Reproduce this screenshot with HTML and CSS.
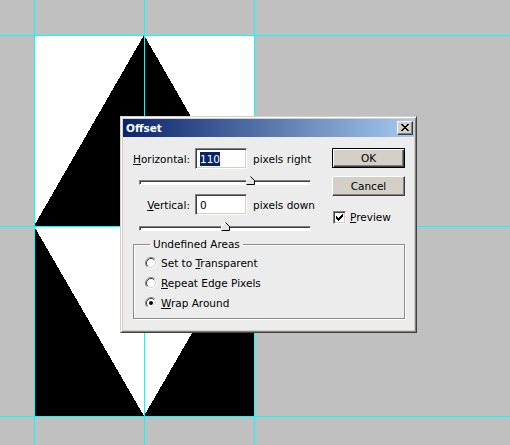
FILE: index.html
```html
<!DOCTYPE html>
<html>
<head>
<meta charset="utf-8">
<title>Offset</title>
<link rel="stylesheet" href="styles.css">
</head>
<body>
<div class="workspace">
  <svg class="doc" width="220" height="381" viewBox="0 0 220 381" shape-rendering="crispEdges">
    <rect width="220" height="381" fill="#fff"/>
    <polygon points="110,0 0,191 220,191" fill="#000"/>
    <polygon points="0,191 0,381 110,381" fill="#000"/>
    <polygon points="220,191 220,381 110,381" fill="#000"/>
  </svg>
  <div class="guide gv x34"></div>
  <div class="guide gv x144"></div>
  <div class="guide gv x254"></div>
  <div class="guide gh y35"></div>
  <div class="guide gh y226"></div>
  <div class="guide gh y416"></div>

  <div class="dialog">
    <div class="titlebar">
      <span class="title">Offset</span>
      <span class="close">
        <svg width="8" height="7" viewBox="0 0 8 7" shape-rendering="crispEdges">
          <path d="M0 0h2v1h-2zM6 0h2v1h-2zM1 1h2v1h-2zM5 1h2v1h-2zM2 2h4v1h-4zM3 3h2v1h-2zM2 4h4v1h-4zM1 5h2v1h-2zM5 5h2v1h-2zM0 6h2v1h-2zM6 6h2v1h-2z" fill="#000"/>
        </svg>
      </span>
    </div>
    <div class="client">
      <div class="top">
        <div class="fields">
          <div class="row">
            <span class="lbl"><u>H</u>orizontal:</span>
            <span class="field"><span class="sel">110</span></span>
            <span class="unit">pixels right</span>
          </div>
          <div class="slider">
            <svg class="thumb th-h" width="9" height="9" viewBox="0 0 9 9">
              <polygon points="0.5,8.5 0.5,4.5 4.5,0.5 8.5,4.5 8.5,8.5" fill="#e4e4e4"/>
              <polyline points="0.5,8 0.5,4.5 4.5,0.5" fill="none" stroke="#fff"/>
              <polyline points="4.5,0.5 8.5,4.5 8.5,8.5 0.5,8.5" fill="none" stroke="#000"/>
            </svg>
          </div>
          <div class="row">
            <span class="lbl"><u>V</u>ertical:</span>
            <span class="field"><span class="val">0</span></span>
            <span class="unit">pixels down</span>
          </div>
          <div class="slider">
            <svg class="thumb th-v" width="9" height="9" viewBox="0 0 9 9">
              <polygon points="0.5,8.5 0.5,4.5 4.5,0.5 8.5,4.5 8.5,8.5" fill="#e4e4e4"/>
              <polyline points="0.5,8 0.5,4.5 4.5,0.5" fill="none" stroke="#fff"/>
              <polyline points="4.5,0.5 8.5,4.5 8.5,8.5 0.5,8.5" fill="none" stroke="#000"/>
            </svg>
          </div>
        </div>
        <div class="buttons">
          <span class="btn default">OK</span>
          <span class="btn cancel">Cancel</span>
          <span class="check">
            <span class="box">
              <svg width="7" height="7" viewBox="0 0 7 7" shape-rendering="crispEdges">
                <path d="M6 0h1v3h-1zM5 1h1v3h-1zM4 2h1v3h-1zM3 3h1v3h-1zM2 4h1v3h-1zM1 3h1v3h-1zM0 2h1v3h-1z" fill="#000"/>
              </svg>
            </span>
            <span><u>P</u>review</span>
          </span>
        </div>
      </div>
      <div class="group">
        <span class="legend">Undefined Areas</span>
        <div class="radio">
          <svg width="12" height="12" viewBox="0 0 12 12">
            <circle cx="6" cy="6" r="5" fill="#fff"/>
            <path d="M2.11 9.89A5.5 5.5 0 0 1 9.89 2.11" fill="none" stroke="#808080"/>
            <path d="M9.89 2.11A5.5 5.5 0 0 1 2.11 9.89" fill="none" stroke="#fff"/>
            <path d="M2.82 9.18A4.5 4.5 0 0 1 9.18 2.82" fill="none" stroke="#404040"/>
            <path d="M9.18 2.82A4.5 4.5 0 0 1 2.82 9.18" fill="none" stroke="#d4d0c8"/>
          </svg>
          <span>Set to <u>T</u>ransparent</span>
        </div>
        <div class="radio">
          <svg width="12" height="12" viewBox="0 0 12 12">
            <circle cx="6" cy="6" r="5" fill="#fff"/>
            <path d="M2.11 9.89A5.5 5.5 0 0 1 9.89 2.11" fill="none" stroke="#808080"/>
            <path d="M9.89 2.11A5.5 5.5 0 0 1 2.11 9.89" fill="none" stroke="#fff"/>
            <path d="M2.82 9.18A4.5 4.5 0 0 1 9.18 2.82" fill="none" stroke="#404040"/>
            <path d="M9.18 2.82A4.5 4.5 0 0 1 2.82 9.18" fill="none" stroke="#d4d0c8"/>
          </svg>
          <span><u>R</u>epeat Edge Pixels</span>
        </div>
        <div class="radio">
          <svg width="12" height="12" viewBox="0 0 12 12">
            <circle cx="6" cy="6" r="5" fill="#fff"/>
            <path d="M2.11 9.89A5.5 5.5 0 0 1 9.89 2.11" fill="none" stroke="#808080"/>
            <path d="M9.89 2.11A5.5 5.5 0 0 1 2.11 9.89" fill="none" stroke="#fff"/>
            <path d="M2.82 9.18A4.5 4.5 0 0 1 9.18 2.82" fill="none" stroke="#404040"/>
            <path d="M9.18 2.82A4.5 4.5 0 0 1 2.82 9.18" fill="none" stroke="#d4d0c8"/>
            <circle cx="6" cy="6" r="2" fill="#000"/>
          </svg>
          <span><u>W</u>rap Around</span>
        </div>
      </div>
    </div>
  </div>
</div>
</body>
</html>
```

FILE: styles.css
```css
html, body {
  margin: 0;
  padding: 0;
}

.workspace {
  position: relative;
  width: 510px;
  height: 445px;
  overflow: hidden;
  background: #c0c0c0;
  font-family: "DejaVu Sans", Verdana, sans-serif;
  font-size: 10.5px;
  color: #000;
}

.doc {
  display: block;
  margin: 35px 0 0 34px;
}

.guide {
  position: absolute;
  background: #00ffff;
}
.gv { top: 0; bottom: 0; width: 1px; }
.gh { left: 0; right: 0; height: 1px; }
.x34 { left: 34px; }
.x144 { left: 144px; }
.x254 { left: 254px; }
.y35 { top: 35px; }
.y226 { top: 226px; }
.y416 { top: 416px; }

.dialog {
  position: absolute;
  left: 120px;
  top: 116px;
  width: 297px;
  height: 217px;
  box-sizing: border-box;
  border: 1px solid;
  border-color: #d4d0c8 #404040 #404040 #d4d0c8;
  box-shadow: inset 1px 1px #fff, inset -1px -1px #808080;
  padding: 2px;
  background: #d4d0c8;
  display: flex;
  flex-direction: column;
}

.titlebar {
  height: 18px;
  flex: 0 0 18px;
  display: flex;
  align-items: center;
  justify-content: space-between;
  padding: 0 1px 0 3px;
  background: linear-gradient(to right, #0a246a, #a6caf0);
}

.title {
  color: #fff;
  font-weight: bold;
  font-size: 10.5px;
  line-height: 18px;
}

.close {
  width: 16px;
  height: 14px;
  box-sizing: border-box;
  border: 1px solid;
  border-color: #fff #404040 #404040 #fff;
  box-shadow: inset -1px -1px #808080;
  background: #d4d0c8;
  display: flex;
  align-items: center;
  justify-content: center;
}
.close svg { display: block; margin: 0 1px 1px 0; }

.client {
  flex: 1;
  background: #ececec;
  padding: 11px 9px 0 10px;
}

.top {
  display: flex;
}

.fields {
  flex: 0 0 199px;
  display: flex;
  flex-direction: column;
}

.row {
  display: flex;
  align-items: center;
  height: 21px;
  line-height: 14px;
}

.lbl {
  width: 57px;
  text-align: right;
  white-space: nowrap;
}

.field {
  width: 52px;
  height: 21px;
  box-sizing: border-box;
  margin-left: 5px;
  border: 1px solid;
  border-color: #808080 #fff #fff #808080;
  box-shadow: inset 1px 1px #404040, inset -1px -1px #d4d0c8;
  background: #fff;
  padding-left: 4px;
  display: flex;
  align-items: center;
}

.sel {
  background: #0a246a;
  color: #fff;
  line-height: 14px;
}

.val {
  line-height: 14px;
}

.unit {
  margin-left: 6px;
  white-space: nowrap;
}

.slider {
  position: relative;
  width: 172px;
  height: 5px;
  box-sizing: border-box;
  margin: 11px 0 9px 6px;
  border: 1px solid;
  border-color: #808080 #fff #fff #808080;
  box-shadow: inset 1px 1px #404040;
  background: #fff;
}
.slider:last-child { margin-bottom: 0; }

.thumb {
  position: absolute;
  top: -5px;
  display: block;
}
.th-h { left: 106px; }
.th-v { left: 81px; }

.buttons {
  flex: 0 0 73px;
  display: flex;
  flex-direction: column;
}

.btn {
  height: 20px;
  box-sizing: border-box;
  border: 1px solid;
  border-color: #fff #404040 #404040 #fff;
  box-shadow: inset -1px -1px #808080;
  background: #d4d0c8;
  display: flex;
  align-items: center;
  justify-content: center;
}

.btn.default {
  border-color: #000;
  box-shadow: inset 1px 1px #fff, inset -1px -1px #404040, inset -2px -2px #808080;
}

.btn.cancel {
  margin-top: 8px;
}

.check {
  margin-top: 15px;
  margin-left: 1px;
  display: flex;
  align-items: center;
  height: 13px;
  line-height: 13px;
}

.box {
  width: 13px;
  height: 13px;
  box-sizing: border-box;
  border: 1px solid;
  border-color: #808080 #fff #fff #808080;
  box-shadow: inset 1px 1px #404040, inset -1px -1px #d4d0c8;
  background: #fff;
  display: flex;
  align-items: center;
  justify-content: center;
  margin-right: 4px;
}
.box svg { display: block; }

.group {
  position: relative;
  margin-top: 13px;
  width: 272px;
  height: 75px;
  box-sizing: border-box;
  border: 1px solid #8c8c8c;
  box-shadow: inset 1px 1px #fff, 1px 1px #fff;
  padding: 8px 0 0 11px;
}

.legend {
  position: absolute;
  top: -7px;
  left: 16px;
  padding: 0 3px;
  line-height: 13px;
  background: #ececec;
}

.radio {
  height: 20px;
  display: flex;
  align-items: center;
}
.radio svg {
  display: block;
  margin-right: 4px;
}
```
